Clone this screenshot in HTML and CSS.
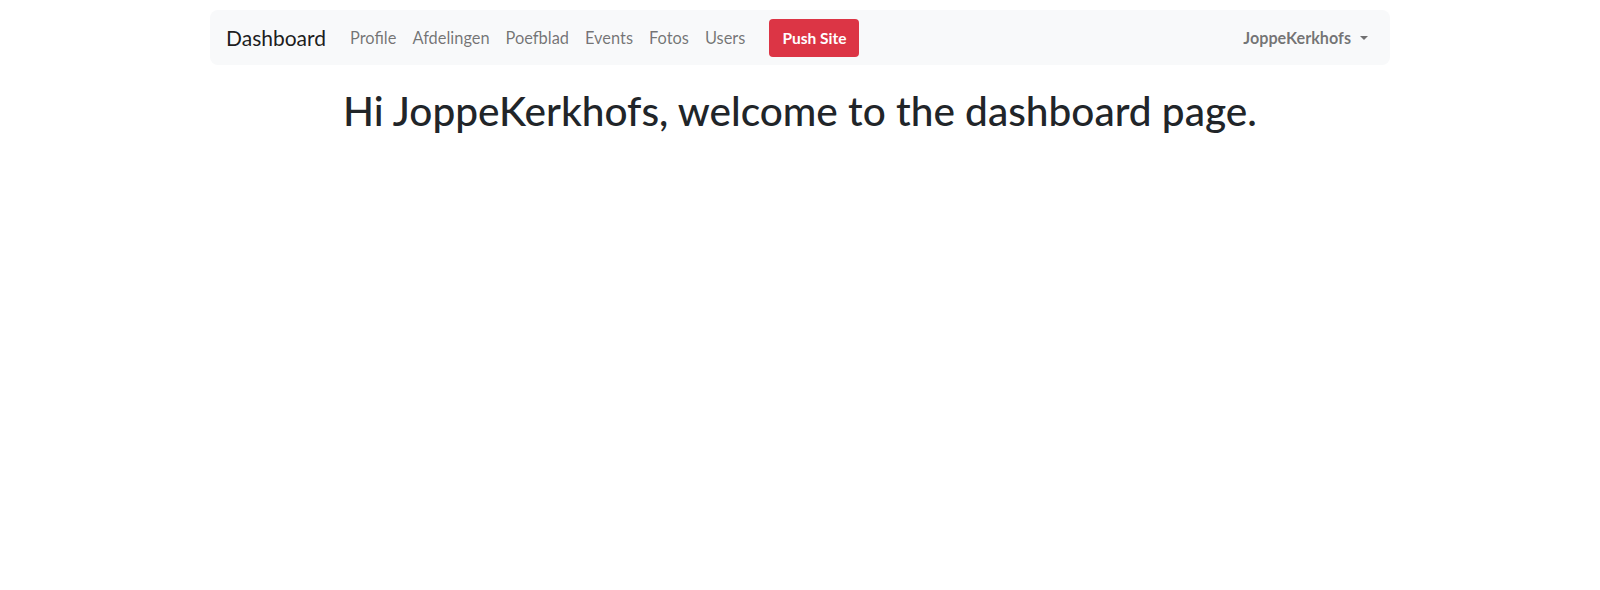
FILE: index.html
```html
<!DOCTYPE html>
<html lang="en">
<head>
<meta charset="utf-8">
<title>Dashboard</title>
<link rel="stylesheet" href="styles.css">
</head>
<body>
<nav class="navbar">
  <a class="brand" href="#">Dashboard</a>
  <ul class="nav-links">
    <li><a href="#">Profile</a></li>
    <li><a href="#">Afdelingen</a></li>
    <li><a href="#">Poefblad</a></li>
    <li><a href="#">Events</a></li>
    <li><a href="#">Fotos</a></li>
    <li><a href="#">Users</a></li>
  </ul>
  <a class="btn-push" href="#">Push Site</a>
  <a class="user-toggle" href="#">JoppeKerkhofs<span class="caret"></span></a>
</nav>
<h1 class="welcome">Hi JoppeKerkhofs, welcome to the dashboard page.</h1>
</body>
</html>
```
FILE: styles.css
```css
* { box-sizing: border-box; }
body {
  margin: 0;
  font-family: Lato, "Noto Sans", sans-serif;
  color: #212529;
  background: #fff;
}
a { text-decoration: none; }
.navbar {
  width: 1180px;
  height: 55px;
  margin: 10px auto 0;
  padding: 0 16px;
  display: flex;
  align-items: center;
  background: #f8f9fa;
  border-radius: 8px;
}
.brand {
  font-size: 21px;
  color: rgba(0,0,0,0.9);
  margin-right: 16px;
}
.nav-links {
  list-style: none;
  margin: 0;
  padding: 0;
  display: flex;
}
.nav-links a {
  display: block;
  padding: 8px 8px;
  font-size: 16.4px;
  color: rgba(0,0,0,0.55);
}
.btn-push {
  margin-left: 16px;
  background: #dc3545;
  color: #fff;
  font-weight: 700;
  font-size: 15.5px;
  padding: 0 13px;
  height: 38px;
  line-height: 38px;
  border-radius: 4px;
}
.user-toggle {
  margin-left: auto;
  display: flex;
  align-items: center;
  font-size: 16.2px;
  font-weight: 700;
  color: rgba(0,0,0,0.55);
  padding: 8px 6px 8px 0;
}
.caret {
  margin-left: 9px;
  width: 0;
  height: 0;
  border-left: 4px solid transparent;
  border-right: 4px solid transparent;
  border-top: 4px solid rgba(0,0,0,0.55);
}
.welcome {
  margin: 22px 0 0;
  text-align: center;
  font-size: 40.6px;
  font-weight: 500;
  line-height: 1.2;
}
```
